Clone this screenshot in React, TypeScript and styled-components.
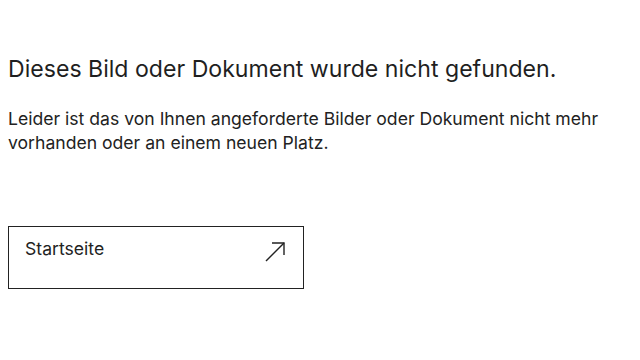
import React from "react";
import styled, { createGlobalStyle } from "styled-components";

const Global = createGlobalStyle`
  html, body { margin: 0; padding: 0; background: #fff; }
  body { font-family: Inter, "Liberation Sans", sans-serif; color: #222; }
`;

const Page = styled.main`
  padding: 54px 8px 0 8px;
  display: flex;
  flex-direction: column;
`;

const Title = styled.h1`
  margin: 0;
  font-size: 23.1px;
  font-weight: 400;
  line-height: 30px;
  color: #1f1f1f;
`;

const Text = styled.p`
  margin: 23px 0 0 0;
  font-size: 17.6px;
  line-height: 24px;
  font-weight: 400;
  color: #222;
  max-width: 620px;
`;

const LinkBox = styled.a`
  margin-top: 71px;
  width: 296px;
  height: 63px;
  box-sizing: border-box;
  border: 1px solid #222;
  display: flex;
  justify-content: space-between;
  align-items: flex-start;
  padding: 10px 17px 0 16px;
  text-decoration: none;
  color: #222;
  font-size: 17.6px;
  line-height: 24px;
`;

const Arrow = styled.svg`
  margin-top: 4px;
  width: 22px;
  height: 22px;
`;

export default function App() {
  return (
    <>
      <Global />
      <Page>
        <Title>Dieses Bild oder Dokument wurde nicht gefunden.</Title>
        <Text>
          Leider ist das von Ihnen angeforderte Bilder oder Dokument nicht mehr vorhanden oder an einem neuen Platz.
        </Text>
        <LinkBox href="#">
          <span>Startseite</span>
          <Arrow viewBox="0 0 22 22" fill="none" stroke="#222" strokeWidth="1.4">
            <path d="M2 20 L20 2" />
            <path d="M8 2 H20 V14" />
          </Arrow>
        </LinkBox>
      </Page>
    </>
  );
}
